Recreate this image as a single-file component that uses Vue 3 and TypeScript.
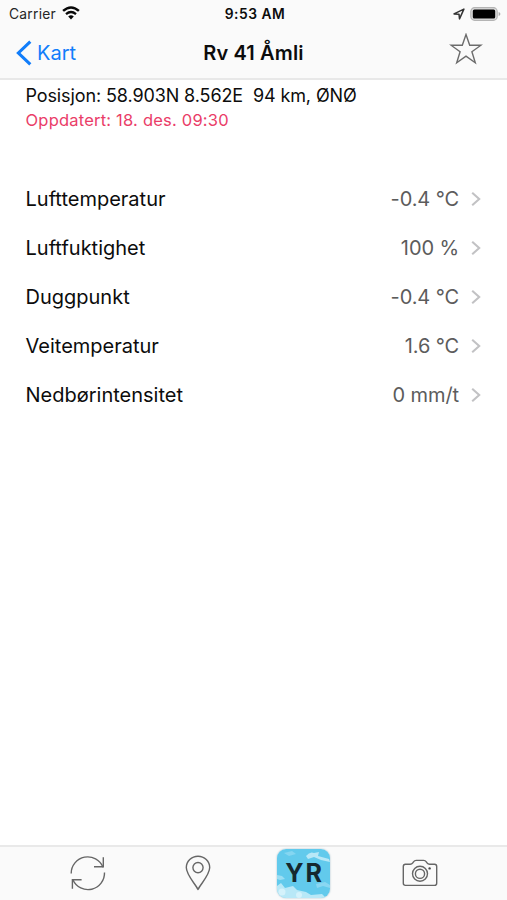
<script setup lang="ts">
interface Reading {
  label: string
  value: string
}

const readings: Reading[] = [
  { label: 'Lufttemperatur', value: '-0.4 °C' },
  { label: 'Luftfuktighet', value: '100 %' },
  { label: 'Duggpunkt', value: '-0.4 °C' },
  { label: 'Veitemperatur', value: '1.6 °C' },
  { label: 'Nedbørintensitet', value: '0 mm/t' },
]
</script>

<template>
  <div class="screen">
    <header class="top">
      <div class="status">
        <div class="carrier">
          <span>Carrier</span>
          <svg class="wifi" width="18" height="14" viewBox="0 0 18 14">
            <path d="M1.1 4.9Q9-2 16.9 4.9" fill="none" stroke="#080808" stroke-width="2.5" />
            <path d="M4 8.1Q9 3.9 14 8.1" fill="none" stroke="#080808" stroke-width="2.3" />
            <path d="M6.2 10.5Q9 8.2 11.8 10.5L9 13.4Z" fill="#080808" />
          </svg>
        </div>
        <span class="time">9:53 AM</span>
        <div class="indicators">
          <svg width="12" height="12" viewBox="0 0 12 12">
            <path d="M1 5.9L10.9 1.1L6.5 10.9L6 6.2Z" fill="none" stroke="#333" stroke-width="1.5" stroke-linejoin="round" />
          </svg>
          <svg width="31" height="14" viewBox="0 0 31 14">
            <rect x="0.8" y="0.7" width="26.4" height="12.6" rx="3.8" fill="#dcdcdc" stroke="#b4b4b4" stroke-width="1.2" />
            <rect x="2.8" y="2.5" width="22.4" height="9" rx="1.6" fill="#000" />
            <path d="M28.6 5Q30.4 5.6 30.4 7T28.6 9Z" fill="#aaa" />
          </svg>
        </div>
      </div>
      <nav class="nav">
        <a class="back">
          <svg width="17" height="26" viewBox="0 0 17 26">
            <path d="M15.3 1.6L3.4 13L15.3 24.4" fill="none" stroke="#117dfa" stroke-width="3.1" />
          </svg>
          <span>Kart</span>
        </a>
        <h1>Rv 41 Åmli</h1>
        <svg class="star" width="34" height="32" viewBox="0 0 34 32">
          <path d="M17 1.5L20.7 12.2H32L22.9 18.8L26.3 29.8L17 23.2L7.7 29.8L11.1 18.8L2 12.2H13.3Z" fill="none" stroke="#6c6c6c" stroke-width="1.4" />
        </svg>
      </nav>
    </header>

    <main>
      <section class="meta">
        <p class="position">Posisjon: 58.903N 8.562E&nbsp; 94 km, ØNØ</p>
        <p class="updated">Oppdatert: 18. des. 09:30</p>
      </section>
      <ul class="readings">
        <li v-for="(r, i) in readings" :key="i">
          <span class="label">{{ r.label }}</span>
          <span class="value">{{ r.value }}</span>
          <svg width="12" height="16" viewBox="0 0 12 16">
            <path d="M2.2 1.8L9.2 8L2.2 14.2" fill="none" stroke="#c2c2c4" stroke-width="2.1" />
          </svg>
        </li>
      </ul>
    </main>

    <footer class="toolbar">
      <svg class="refresh" width="38" height="38" viewBox="0 0 38 38" fill="none" stroke="#666" stroke-width="1.4">
        <path d="M2.2 19.4A16.5 16.5 0 0 1 34 13.2" />
        <path d="M34.3 3.3V12.8H25" />
        <path d="M35.5 18.6A16.5 16.5 0 0 1 4 26" />
        <path d="M3.4 34.7V25.7H12.6" />
      </svg>
      <svg class="pin" width="26" height="36" viewBox="0 0 26 36" fill="none" stroke="#666" stroke-width="1.4">
        <path d="M13 34.6C10.8 29.4 1.3 20.2 1.3 12.6A11.7 11.4 0 0 1 24.7 12.6C24.7 20.2 15.2 29.4 13 34.6Z" stroke-linejoin="round" />
        <circle cx="13" cy="12.6" r="5.1" />
      </svg>
      <div class="yr">
        <svg class="sky" width="53" height="49" viewBox="0 0 53 49">
          <defs>
            <filter id="soft" x="-20%" y="-40%" width="140%" height="180%"><feGaussianBlur stdDeviation="0.7" /></filter>
          </defs>
          <rect width="53" height="49" fill="#62caec" />
          <g fill="#d4f2fb" filter="url(#soft)">
            <path d="M29 7Q33 2 37 4L42 3L41 7L52 10L53 13L44 11L37 8L31 10Z" opacity=".75" />
            <path d="M0 37L4 34L8 39L16 37L20 41L29 43L34 46L45 45L49 49H0Z" opacity=".75" />
            <path d="M0 26L5 27L8 30L3 31L0 30Z" opacity=".5" />
            <path d="M39 35L48 33L53 36V39L46 37L40 39Z" opacity=".35" />
            <path d="M7 4L15 2L19 5L12 7Z" opacity=".3" />
            <circle cx="5" cy="43" r="3.5" />
            <circle cx="22" cy="46" r="3" />
          </g>
        </svg>
        <span>YR</span>
      </div>
      <svg class="camera" width="36" height="28" viewBox="0 0 36 28" fill="none" stroke="#666" stroke-width="1.4">
        <path d="M3.4 5.2H8.2Q9.8 5.2 10.8 3.8L11.5 2.8Q12.5 1.4 14.2 1.4H21.6Q23.3 1.4 24.3 2.8L25 3.8Q26 5.2 27.6 5.2H32.6Q34.7 5.2 34.7 7.4V24.3Q34.7 26.4 32.6 26.4H3.4Q1.3 26.4 1.3 24.3V7.4Q1.3 5.2 3.4 5.2Z" />
        <circle cx="18" cy="14.8" r="7.5" />
        <circle cx="18" cy="14.8" r="4.6" />
        <circle cx="27.6" cy="9.4" r="1.2" fill="#444" stroke="none" />
      </svg>
    </footer>
  </div>
</template>

<style>
body {
  margin: 0;
  background: #fff;
}
</style>

<style scoped>
.screen {
  display: flex;
  flex-direction: column;
  box-sizing: border-box;
  width: 507px;
  height: 900px;
  background: #fff;
  color: #0c0c0c;
  font-family: Inter, "Liberation Sans", sans-serif;
}
svg {
  display: block;
  flex: none;
}
.top {
  box-sizing: border-box;
  height: 80px;
  border-bottom: 2px solid #e8e8e8;
  background: #fafafa;
}
.status {
  display: grid;
  grid-template-columns: 1fr auto 1fr;
  align-items: center;
  height: 27px;
  padding: 0 6px 0 9px;
  font-size: 13.8px;
}
.carrier {
  display: flex;
  align-items: center;
  gap: 6px;
  color: #262626;
  letter-spacing: 0.25px;
}
.wifi {
  margin-bottom: 1px;
}
.time {
  font-weight: 600;
  letter-spacing: 0.5px;
}
.indicators {
  display: flex;
  align-items: center;
  justify-content: flex-end;
  gap: 5px;
}
.nav {
  display: grid;
  grid-template-columns: 1fr auto 1fr;
  align-items: center;
  height: 51px;
  padding: 0 24px;
}
.back {
  display: flex;
  align-items: center;
  gap: 5px;
  margin-left: -9px;
  color: #117dfa;
  font-size: 20px;
}
h1 {
  margin: 0;
  font-size: 20px;
  font-weight: 600;
  letter-spacing: 0.15px;
}
.star {
  justify-self: end;
  margin-bottom: 8px;
}
main {
  flex: 1;
}
.meta {
  padding: 3px 25.5px 0;
}
.meta p {
  margin: 0;
}
.position {
  font-size: 18px;
  line-height: 25px;
  letter-spacing: -0.11px;
}
.updated {
  color: #ea3d68;
  font-size: 16.5px;
  line-height: 24px;
  letter-spacing: 0.21px;
}
.readings {
  margin: 43px 0 0;
  padding: 0 25px 0 25.5px;
  list-style: none;
}
.readings li {
  display: flex;
  align-items: center;
  height: 48.8px;
  font-size: 20px;
}
.label {
  flex: 1;
}
.value {
  margin-right: 11px;
  color: #5c5c5c;
  letter-spacing: -0.1px;
}
.toolbar {
  display: flex;
  align-items: center;
  box-sizing: border-box;
  height: 55px;
  padding-left: 69px;
  border-top: 2px solid #e9e9e9;
  background: #fafafa;
}
.refresh,
.pin,
.camera {
  margin-bottom: 1px;
}
.pin {
  margin-left: 78px;
}
.yr {
  display: grid;
  place-items: center;
  width: 53px;
  height: 49px;
  margin-left: 66px;
  overflow: hidden;
  border-radius: 9px;
  box-shadow: 0 0 2px #9cb8c4;
}
.yr > * {
  grid-area: 1 / 1;
}
.yr span {
  z-index: 1;
  color: #15282f;
  font-size: 25px;
  font-weight: 700;
  line-height: 1;
  letter-spacing: 2px;
  margin-right: -2px;
}
.camera {
  margin-left: 72px;
}
</style>
